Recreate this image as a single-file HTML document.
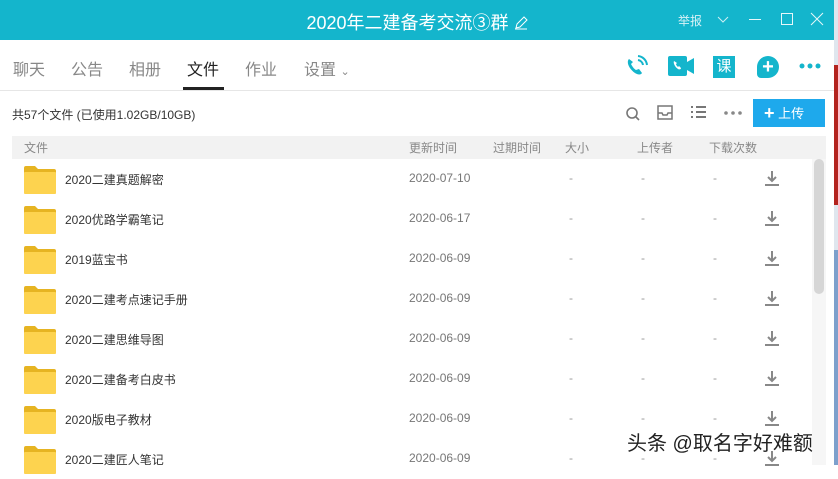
<!DOCTYPE html>
<html><head><meta charset="utf-8"><style>
*{margin:0;padding:0;box-sizing:border-box}
body{width:838px;height:465px;overflow:hidden;position:relative;background:#fff;font-family:"Liberation Sans","Noto Sans CJK SC",sans-serif;color:#333}
.abs{position:absolute}
.title{left:0;top:0;width:834px;height:40px;background:#14b5cc;color:#fff}
.tabs span{position:absolute;top:56px;font-size:16px;color:#888}
.hdr{left:12px;top:136px;width:814px;height:23px;background:#f2f2f2;font-size:12px;color:#888}
.hdr span,.row span{position:absolute}
.row{left:0;width:812px;height:40px;font-size:12px}
.fold{position:absolute;left:24px;top:7px;width:32px;height:28px}
.dl{position:absolute;left:764px;top:11px}
</style></head><body>
<div class="abs" style="left:834px;top:0;width:4px;height:465px;background:#dfe6ee"></div>
<div class="abs" style="left:834px;top:65px;width:4px;height:140px;background:#b3231e"></div>
<div class="abs" style="left:834px;top:250px;width:4px;height:215px;background:#7da0cc"></div>
<div class="abs title">
<div class="abs" style="left:0;width:834px;text-align:center;top:9px;font-size:18px">2020年二建备考交流③群 <svg width="14" height="14" style="vertical-align:-1px"><path d="M2 12l1-4 7-7 3 3-7 7zM1 13h12" stroke="#fff" fill="none"/></svg></div>
<div class="abs" style="left:678px;top:12px;font-size:12px;color:#d8f2f6">举报</div>
<svg class="abs" style="left:716px;top:14px" width="14" height="10"><path d="M2 3l5 5 5-5" stroke="#cdeff4" fill="none"/></svg>
<div class="abs" style="left:749px;top:19px;width:12px;height:1px;background:#e6f7fa"></div>
<div class="abs" style="left:781px;top:13px;width:12px;height:12px;border:1px solid #e6f7fa"></div>
<svg class="abs" style="left:810px;top:12px" width="14" height="14"><path d="M1 1l12 12M13 1L1 13" stroke="#e6f7fa"/></svg>
</div>
<div class="tabs">
<span style="left:13px">聊天</span><span style="left:71px">公告</span><span style="left:129px">相册</span><span style="left:187px;color:#222">文件</span><span style="left:245px">作业</span><span style="left:304px">设置 <small style="font-size:11px">⌄</small></span>
</div>
<div class="abs" style="left:183px;top:87px;width:41px;height:3px;background:#222"></div>
<div class="abs" style="left:0;top:90px;width:834px;height:1px;background:#e6e6e6"></div>
<svg class="abs" style="left:624px;top:55px" width="24" height="24"><path d="M5 4c-3 3 0 10 6 14 3 2 6 2 7 0l-3-4-3 1c-2-1-4-4-5-6l2-2-4-3z" fill="#14b5cc"/><path d="M14 5a6 6 0 0 1 5 5M14 1a10 10 0 0 1 9 9" stroke="#14b5cc" stroke-width="2" fill="none"/></svg>
<svg class="abs" style="left:668px;top:56px" width="26" height="20"><rect x="0" y="0" width="19" height="20" rx="2" fill="#14b5cc"/><path d="M19 6l7-4v16l-7-4z" fill="#14b5cc"/><path d="M6 5c-1 2 1 6 4 8 2 1 3 0 3-1l-2-2-1 1c-1-1-2-2-2-3l1-1z" fill="#fff"/></svg>
<div class="abs" style="left:713px;top:56px;width:22px;height:22px;background:#14b5cc;color:#fff;font-size:15px;text-align:center;line-height:22px">课</div>
<div class="abs" style="left:757px;top:56px;width:22px;height:22px;border-radius:50% 50% 50% 4px;background:#14b5cc;color:#fff;font-size:20px;text-align:center;line-height:22px;font-weight:bold">+</div>
<svg class="abs" style="left:799px;top:62px" width="24" height="8"><circle cx="3" cy="4" r="2.5" fill="#14b5cc"/><circle cx="11" cy="4" r="2.5" fill="#14b5cc"/><circle cx="19" cy="4" r="2.5" fill="#14b5cc"/></svg>
<div class="abs" style="left:12px;top:106px;font-size:12px;color:#333">共57个文件 (已使用1.02GB/10GB)</div>
<svg class="abs" style="left:625px;top:106px" width="16" height="16"><circle cx="7" cy="7" r="5" stroke="#777" stroke-width="1.6" fill="none"/><path d="M11 11l3 3" stroke="#777" stroke-width="1.6"/></svg>
<svg class="abs" style="left:656px;top:104px" width="18" height="17"><path d="M2 2h14v13H2zM2 9h4l1 2h4l1-2h4" stroke="#777" stroke-width="1.5" fill="none"/></svg>
<svg class="abs" style="left:690px;top:105px" width="18" height="15"><path d="M1 2h2M6 2h10M1 7h2M6 7h10M1 12h2M6 12h10" stroke="#777" stroke-width="2"/></svg>
<svg class="abs" style="left:723px;top:110px" width="20" height="6"><circle cx="3" cy="3" r="1.8" fill="#888"/><circle cx="10" cy="3" r="1.8" fill="#888"/><circle cx="17" cy="3" r="1.8" fill="#888"/></svg>
<div class="abs" style="left:753px;top:99px;width:72px;height:28px;background:#1ea9ec;color:#fff;font-size:13px;line-height:28px;padding-left:11px"><b style="font-size:18px;vertical-align:-1px">+</b> 上传</div>
<div class="abs hdr"><span style="left:12px;top:3px">文件</span><span style="left:397px;top:3px">更新时间</span><span style="left:481px;top:3px">过期时间</span><span style="left:553px;top:3px">大小</span><span style="left:625px;top:3px">上传者</span><span style="left:697px;top:3px">下载次数</span></div>
<div class="abs" style="left:812px;top:159px;width:14px;height:306px;background:#f6f6f6"></div>
<div class="abs" style="left:814px;top:159px;width:10px;height:135px;border-radius:5px;background:#d6d6d6"></div>
<div id="rows"></div>
<script>
var n=["2020二建真题解密","2020优路学霸笔记","2019蓝宝书","2020二建考点速记手册","2020二建思维导图","2020二建备考白皮书","2020版电子教材","2020二建匠人笔记"],d=["2020-07-10","2020-06-17","2020-06-09","2020-06-09","2020-06-09","2020-06-09","2020-06-09","2020-06-09"],h="";
for(var i=0;i<8;i++){h+='<div class="abs row" style="top:'+(159+i*40)+'px"><svg class="fold" viewBox="0 0 32 28"><path d="M0 2q0-2 2-2h9l3 3h16q2 0 2 2v3H0z" fill="#e6b422"/><rect x="0" y="6" width="32" height="22" rx="1" fill="#fdd34f"/></svg><span style="left:65px;top:12px">'+n[i]+'</span><span style="left:409px;top:12px;color:#777">'+d[i]+'</span><span style="left:569px;top:12px;color:#999">-</span><span style="left:641px;top:12px;color:#999">-</span><span style="left:713px;top:12px;color:#999">-</span><svg class="dl" width="16" height="16"><path d="M8 1v9M4 7l4 4 4-4" stroke="#888" stroke-width="2" fill="none"/><path d="M1 15h14" stroke="#888" stroke-width="2"/></svg></div>';}
document.getElementById("rows").innerHTML=h;
</script>
<div class="abs" style="left:627px;top:427px;font-size:20px;color:#222;text-shadow:0 0 2px #fff,0 0 2px #fff">头条 @取名字好难额</div>
</body></html>
